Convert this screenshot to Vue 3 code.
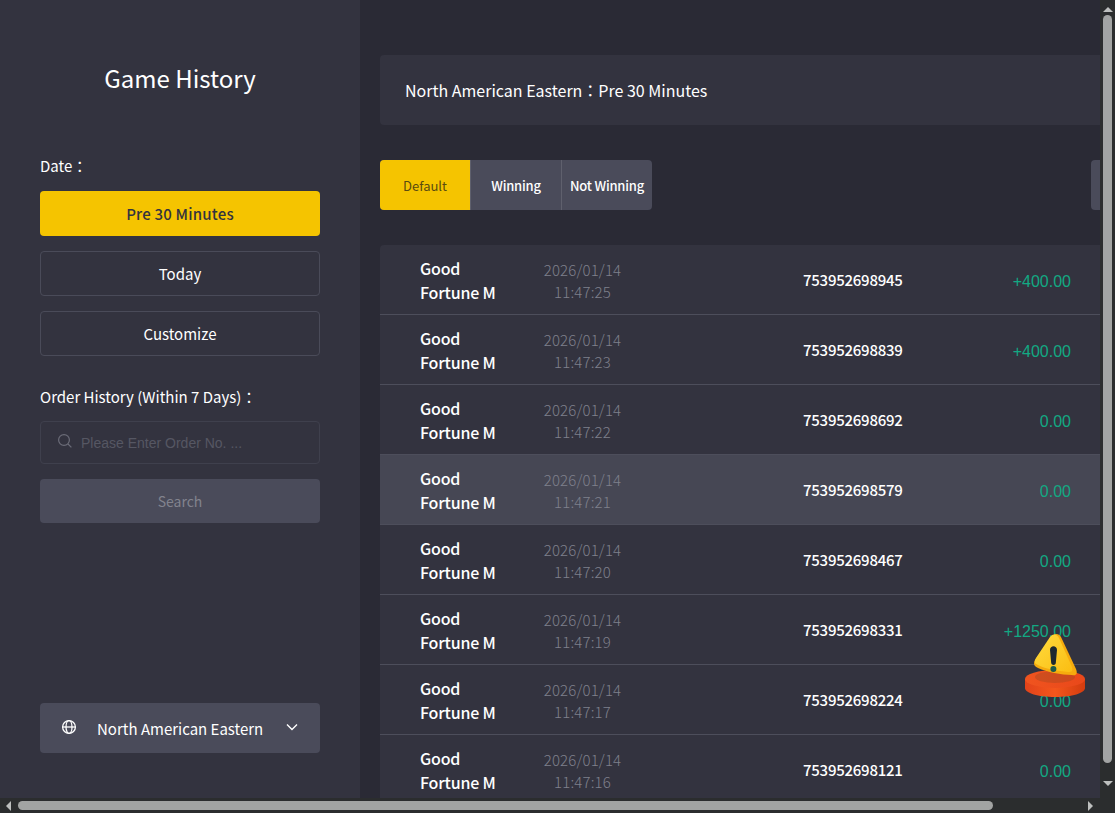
<template>
  <div class="shell">
    <div class="viewport">
      <aside class="side">
        <h1 class="title">Game History</h1>
        <div class="label date-label">Date：</div>
        <div class="btn active">Pre 30 Minutes</div>
        <div class="btn outline">Today</div>
        <div class="btn outline">Customize</div>
        <div class="label order-label">Order History (Within 7 Days)：</div>
        <div class="search-box">
          <svg class="search-icon" width="16" height="16" viewBox="0 0 16 16" fill="none" stroke="#6b6c78" stroke-width="1.2">
            <circle cx="7" cy="7" r="5.4" />
            <path d="M11 11l3.4 3.4" />
          </svg>
          <input class="search-input" placeholder="Please Enter Order No. ..." />
        </div>
        <div class="btn search-btn">Search</div>
        <div class="tz">
          <svg class="tz-globe" width="16" height="16" viewBox="0 0 16 16" fill="none" stroke="#fff" stroke-width="1.3">
            <circle cx="8" cy="8" r="6.4" />
            <ellipse cx="8" cy="8" rx="3" ry="6.4" />
            <path d="M1.6 8h12.8" />
          </svg>
          <span class="tz-name">North American Eastern</span>
          <svg class="tz-arrow" width="12" height="8" viewBox="0 0 12 8" fill="none" stroke="#fff" stroke-width="1.4">
            <path d="M1 1.5l5 5 5-5" />
          </svg>
        </div>
      </aside>

      <main class="main">
        <div class="head">North American Eastern：Pre 30 Minutes</div>
        <div class="filters">
          <div class="tabs">
            <div v-for="t in tabs" :key="t" class="tab" :class="{ on: t === 'Default' }">{{ t }}</div>
          </div>
          <div class="extra"></div>
        </div>
        <div class="list">
          <div v-for="r in rows" :key="r.id" class="row" :class="{ hover: r.id === '753952698579' }">
            <div class="game">Good<br />Fortune M</div>
            <div class="time">{{ r.date }}<br />{{ r.time }}</div>
            <div class="order">{{ r.id }}</div>
            <div class="amount">{{ r.amount }}</div>
          </div>
        </div>
      </main>

      <div class="alert">
        <svg width="60" height="64" viewBox="0 0 60 64">
          <defs>
            <linearGradient id="disc" x1="0" y1="0" x2="1" y2="0">
              <stop offset="0" stop-color="#e2431a" />
              <stop offset="0.5" stop-color="#f4561c" />
              <stop offset="1" stop-color="#d33c0f" />
            </linearGradient>
            <linearGradient id="discTop" x1="0" y1="0" x2="1" y2="0">
              <stop offset="0" stop-color="#f0541f" />
              <stop offset="1" stop-color="#e9481a" />
            </linearGradient>
            <linearGradient id="tri" x1="0" y1="0" x2="1" y2="1">
              <stop offset="0" stop-color="#ffdc3f" />
              <stop offset="1" stop-color="#fbbd12" />
            </linearGradient>
          </defs>
          <path d="M0 46v9c0 5 13 9 30 9s30-4 30-9v-9z" fill="url(#disc)" />
          <ellipse cx="30" cy="46" rx="30" ry="9" fill="url(#discTop)" />
          <ellipse cx="30" cy="44" rx="20" ry="6" fill="#a84a22" opacity="0.45" />
          <path d="M26 4c3-4 8-4 10 0l15 32c2 5 0 7-4 6-11 0-25-3-34-7-4-2-5-4-3-8z" fill="#f6ab0d" />
          <path d="M25 4c3-4 7-3 9 1l13 29c1 4 0 5-4 5-10-1-22-3-30-7-4-2-4-3-2-7z" fill="url(#tri)" />
          <path d="M25 17c0-5 7-5 7 0l-1.200 13c0 2.500-4.400 2.500-4.600 0z" fill="#1e2930" />
          <circle cx="28.400" cy="36" r="3" fill="#1f5a4a" />
        </svg>
      </div>
    </div>

    <div class="vbar">
      <span class="arrow up"></span>
      <span class="vthumb"></span>
      <span class="arrow down"></span>
    </div>
    <div class="hbar">
      <span class="arrow left"></span>
      <span class="hthumb"></span>
      <span class="arrow right"></span>
    </div>
    <div class="corner"></div>
  </div>
</template>

<script setup>
const tabs = ['Default', 'Winning', 'Not Winning']

const rows = [
  { id: '753952698945', date: '2026/01/14', time: '11:47:25', amount: '+400.00' },
  { id: '753952698839', date: '2026/01/14', time: '11:47:23', amount: '+400.00' },
  { id: '753952698692', date: '2026/01/14', time: '11:47:22', amount: '0.00' },
  { id: '753952698579', date: '2026/01/14', time: '11:47:21', amount: '0.00' },
  { id: '753952698467', date: '2026/01/14', time: '11:47:20', amount: '0.00' },
  { id: '753952698331', date: '2026/01/14', time: '11:47:19', amount: '+1250.00' },
  { id: '753952698224', date: '2026/01/14', time: '11:47:17', amount: '0.00' },
  { id: '753952698121', date: '2026/01/14', time: '11:47:16', amount: '0.00' },
]
</script>

<style>
html,
body {
  margin: 0;
  overflow: hidden;
  background: #2a2a35;
}
</style>

<style scoped>
.shell {
  display: grid;
  grid-template-columns: 1100px 15px;
  grid-template-rows: 798px 15px;
  width: 1115px;
  height: 813px;
  font-family: 'Noto Sans CJK TC', 'Noto Sans', sans-serif;
  color: #fff;
  overflow: hidden;
}
.viewport {
  position: relative;
  display: flex;
  overflow: hidden;
  background: #2a2a35;
}
.side {
  flex: 0 0 360px;
  box-sizing: border-box;
  display: flex;
  flex-direction: column;
  padding: 0 40px;
  background: #33333f;
}
.title {
  margin: 56px 0 0;
  height: 46px;
  font-size: 24px;
  font-weight: 400;
  line-height: 44px;
  text-align: center;
}
.label {
  font-size: 15px;
  line-height: 22px;
}
.date-label {
  margin-top: 53px;
}
.btn {
  box-sizing: border-box;
  height: 45px;
  border-radius: 4px;
  font-size: 15px;
  line-height: 45px;
  text-align: center;
}
.active {
  margin-top: 14px;
  background: #f5c400;
  color: #33333f;
  font-weight: 500;
  letter-spacing: 0.2px;
}
.outline {
  margin-top: 15px;
  border: 1px solid #4a4b59;
  line-height: 43px;
}
.order-label {
  margin-top: 30px;
}
.search-box {
  box-sizing: border-box;
  display: flex;
  align-items: center;
  height: 43px;
  margin-top: 13px;
  padding-left: 16px;
  border: 1px solid #3f404d;
  border-radius: 4px;
}
.search-icon {
  flex: none;
  margin-top: -4px;
}
.search-input {
  flex: 1;
  min-width: 0;
  margin-left: 8px;
  padding: 0;
  border: 0;
  outline: 0;
  background: transparent;
  color: #fff;
  font-family: 'Liberation Sans', Arial, sans-serif;
  font-size: 14px;
}
.search-input::placeholder {
  color: #565763;
  opacity: 1;
}
.search-btn {
  height: 44px;
  margin-top: 15px;
  background: #4a4b5a;
  color: #82838e;
  font-size: 14px;
  line-height: 44px;
}
.tz {
  display: flex;
  align-items: center;
  height: 50px;
  margin-top: 180px;
  padding: 0 21px;
  border-radius: 4px;
  background: #4a4b5a;
  font-size: 15px;
}
.tz-globe {
  flex: none;
  margin-top: -2px;
}
.tz-name {
  flex: 1;
  margin-left: 20px;
  white-space: nowrap;
}
.tz-arrow {
  flex: none;
  margin-top: -3px;
  margin-right: 1px;
}
.main {
  flex: 1;
  min-width: 0;
  padding: 55px 0 0 20px;
  background: #2a2a35;
}
.head {
  height: 70px;
  padding-left: 25px;
  border-radius: 4px 0 0 4px;
  background: #33333f;
  font-size: 16px;
  line-height: 70px;
}
.filters {
  display: flex;
  justify-content: space-between;
  margin-top: 35px;
}
.tabs {
  display: flex;
  height: 50px;
  border-radius: 4px;
  overflow: hidden;
  background: #4a4b5a;
}
.tab {
  width: 90px;
  border-left: 1px solid #5f606d;
  font-size: 13px;
  font-weight: 500;
  line-height: 52px;
  letter-spacing: -0.2px;
  text-align: center;
  white-space: nowrap;
}
.tab:first-child {
  border-left: 0;
}
.tab.on {
  background: #f5c400;
  color: #5a4b10;
  font-weight: 400;
  letter-spacing: 0;
}
.extra {
  width: 9px;
  height: 50px;
  border-radius: 4px 0 0 4px;
  background: #4a4b5a;
}
.list {
  margin-top: 35px;
  border-radius: 4px 0 0 0;
  overflow: hidden;
  background: #33333f;
}
.row {
  box-sizing: border-box;
  display: flex;
  align-items: center;
  height: 70px;
  border-bottom: 1px solid #4d4e5b;
}
.row.hover {
  background: #464754;
}
.game {
  width: 123px;
  margin-left: 40px;
  font-size: 16px;
  font-weight: 500;
  line-height: 24px;
  letter-spacing: -0.2px;
}
.time {
  width: 79px;
  padding-top: 2px;
  color: #7f808c;
  font-size: 15px;
  font-weight: 300;
  line-height: 22px;
  letter-spacing: 0.15px;
  text-align: center;
  white-space: nowrap;
}
.order {
  width: 100px;
  margin-left: 181px;
  font-size: 15px;
  font-weight: 500;
  letter-spacing: -0.25px;
  text-align: left;
}
.amount {
  flex: 1;
  padding-top: 4px;
  padding-right: 29px;
  color: #12a983;
  font-family: 'Liberation Sans', Arial, sans-serif;
  font-size: 16px;
  text-align: right;
}
.alert {
  position: absolute;
  left: 1025px;
  top: 633px;
  width: 60px;
  height: 64px;
}
.vbar,
.hbar,
.corner {
  background: #2b2d2e;
}
.vbar {
  display: flex;
  flex-direction: column;
  align-items: center;
}
.vthumb {
  width: 9px;
  height: 748px;
  margin: 3px 0 0;
  border-radius: 5px;
  background: #a2a4a3;
}
.hbar {
  display: flex;
  align-items: center;
}
.hthumb {
  width: 975px;
  height: 9px;
  margin: 0 0 0 7px;
  border-radius: 5px;
  background: #a2a4a3;
}
.arrow {
  flex: none;
  width: 0;
  height: 0;
  border-style: solid;
  border-color: transparent;
}
.arrow.up {
  margin-top: 7px;
  border-width: 0 5px 5px;
  border-bottom-color: #bdbfbe;
}
.arrow.down {
  margin-top: 18px;
  border-width: 5px 5px 0;
  border-top-color: #bdbfbe;
}
.arrow.left {
  margin-left: 6px;
  border-width: 5px 5px 5px 0;
  border-right-color: #bdbfbe;
}
.arrow.right {
  margin-left: 95px;
  border-width: 5px 0 5px 5px;
  border-left-color: #bdbfbe;
}
</style>
